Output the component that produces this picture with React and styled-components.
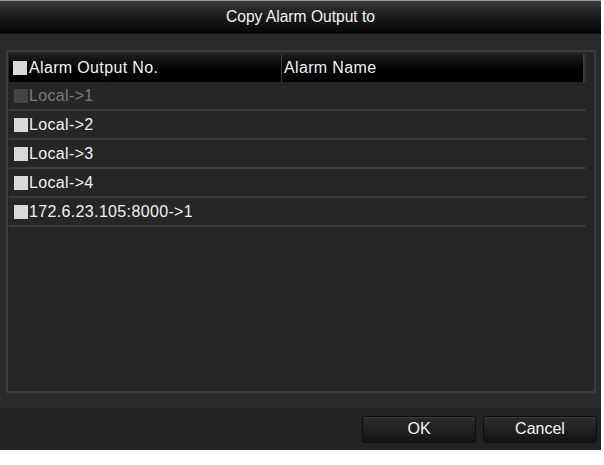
import React from 'react';
import styled, { createGlobalStyle } from 'styled-components';

const GlobalStyle = createGlobalStyle`
    body {
        margin: 0;
        background: #ffffff;
        font-family: "Liberation Sans", Arial, sans-serif;
    }
`;

const Dialog = styled.div`
    width: 601px;
    height: 450px;
    display: flex;
    flex-direction: column;
    background: #2b2b2b;
    border-top: 1px solid #9a9a9a;
    box-sizing: border-box;
`;

const TitleBar = styled.div`
    height: 32px;
    display: flex;
    align-items: center;
    justify-content: center;
    background: linear-gradient(#3a3a3a 0%, #1c1c1c 45%, #050505 100%);
    border-bottom: 1px solid #111;
    color: #f4f4f4;
    font-size: 15.6px;
`;

const Body = styled.div`
    flex: 1;
    display: flex;
    padding: 16px 5px 15px 6px;
`;

const TablePanel = styled.div`
    flex: 1;
    display: flex;
    flex-direction: column;
    background: #262626;
    border: 2px solid #3c3c3c;
    padding: 2px 8px 0 1px;
`;

const HeaderRow = styled.div`
    display: grid;
    grid-template-columns: 273px 1fr;
    height: 28px;
    background: linear-gradient(#1e1e1e, #000 60%);
    border-right: 2px solid #333;
`;

const HeaderCell = styled.div`
    display: flex;
    align-items: center;
    gap: 2px;
    padding-left: ${p => p.$pad || 4}px;
    color: #f2f2f2;
    font-size: 16px;
    letter-spacing: 0.35px;
    border-right: 1px solid #3d3d3d;
`;

const Row = styled.div`
    display: flex;
    align-items: center;
    gap: 1px;
    height: 27px;
    padding-left: 5px;
    border-bottom: 2px solid #3a3a3a;
    color: ${p => (p.$disabled ? '#7a7a7a' : '#f2f2f2')};
    font-size: 16px;
    letter-spacing: 0.35px;
`;

const Check = styled.span`
    width: 14px;
    height: 14px;
    background: ${p => (p.$disabled ? '#444444' : '#d9d9d9')};
    flex-shrink: 0;
`;

const Footer = styled.div`
    height: 42px;
    display: flex;
    align-items: center;
    justify-content: flex-end;
    gap: 7px;
    padding-right: 4px;
    background: #222222;
`;

const Button = styled.button`
    width: 114px;
    height: 27px;
    border: 1px solid #0c0c0c;
    border-radius: 3px;
    background: linear-gradient(#2c2c2c, #141414);
    box-shadow: inset 0 1px 0 #3a3a3a;
    color: #f4f4f4;
    font-family: "Liberation Sans", Arial, sans-serif;
    font-size: 16px;
`;

const outputs = [
    { name: 'Local->1', disabled: true },
    { name: 'Local->2' },
    { name: 'Local->3' },
    { name: 'Local->4' },
    { name: '172.6.23.105:8000->1' },
];

export default () => {
    return (
        <>
            <GlobalStyle />
            <Dialog>
                <TitleBar>Copy Alarm Output to</TitleBar>
                <Body>
                    <TablePanel>
                        <HeaderRow>
                            <HeaderCell><Check />Alarm Output No.</HeaderCell>
                            <HeaderCell $pad={2}>Alarm Name</HeaderCell>
                        </HeaderRow>
                        {outputs.map(o => (
                            <Row key={o.name} $disabled={o.disabled}>
                                <Check $disabled={o.disabled} />
                                {o.name}
                            </Row>
                        ))}
                    </TablePanel>
                </Body>
                <Footer>
                    <Button>OK</Button>
                    <Button>Cancel</Button>
                </Footer>
            </Dialog>
        </>
    );
};
